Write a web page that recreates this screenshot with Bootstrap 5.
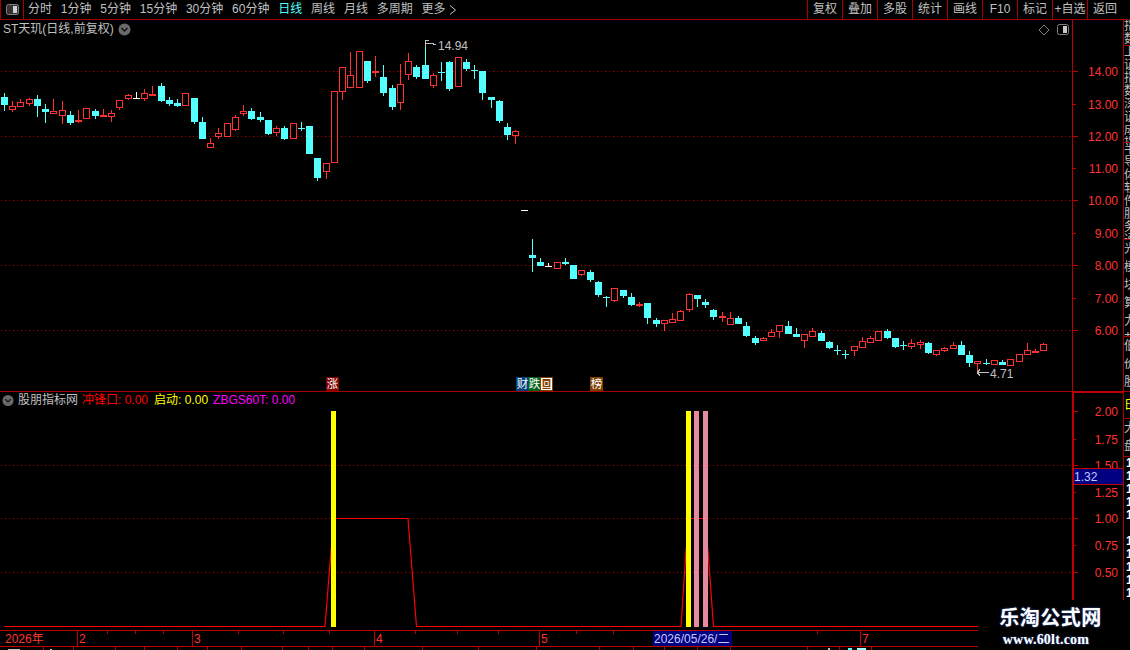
<!DOCTYPE html>
<html lang="zh-CN">
<head>
  <meta charset="UTF-8" />
  <meta name="viewport" content="width=device-width, initial-scale=1.0"/>
  <title>ST天玑 日线</title>
  <link href="https://cdn.jsdelivr.net/npm/bootstrap@5.3.2/dist/css/bootstrap.min.css" rel="stylesheet">
  <style>
    html, body {
      height: 650px;
      overflow: hidden;
      background: #000;
    }

    body {
      position: relative;
      width: 1130px;
      font: 12px/16px "Liberation Sans", "Noto Sans CJK SC", sans-serif;
      color: #c0c0c0;
    }

    .tool-bar {
      height: 20px;
      border-bottom: 1px solid #a80000;
    }

    .tool-first {
      width: 24px;
      padding-left: 4px;
      border-left: 1px solid #a80000;
      border-right: 1px solid #a80000;
    }

    .tool-tabs {
      gap: 8.8px;
      padding-left: 4px;
    }

    .tool-tabs .nav-link,
    .tool-right .nav-link {
      padding: 0;
      color: #c0c0c0;
      line-height: 19px;
      white-space: nowrap;
    }

    .tool-tabs .nav-link.active-tab {
      color: #54ffff;
    }

    .tool-right .nav-link {
      width: 35px;
      text-align: center;
      border-left: 1px solid #a80000;
    }

    .tool-right {
      padding-right: 8px;
    }

    .pane-main {
      height: 372px;
    }

    .pane-sub {
      height: 238px;
    }

    .pane-axis {
      height: 20px;
    }

    .pane-main svg,
    .pane-sub svg,
    .pane-axis svg {
      display: block;
    }

    svg text {
      font-family: "Liberation Sans", "Noto Sans CJK SC", sans-serif;
      font-size: 12px;
    }

    .work-left {
      width: 1123px;
    }

    .pane-head {
      position: absolute;
      left: 3px;
      top: 1px;
      gap: 4px;
      white-space: nowrap;
    }

    .sub-head {
      left: 2px;
      top: 0;
    }

    .val-red { color: #ff0000; margin-right: 2px; }
    .val-yellow { color: #ffff00; margin-right: 1px; }
    .val-pink { color: #ff00ff; }

    .side-strip {
      width: 7px;
      height: 630px;
      border-left: 1px solid #a80000;
      overflow: hidden;
    }

    .strip-cell {
      overflow: hidden;
      border-bottom: 1px solid #a80000;
      flex-shrink: 0;
      line-height: 13px;
    }

    .strip-cell div {
      width: 13px;
      word-break: break-all;
    }

    .strip-sparse {
      line-height: 18px;
    }

    .strip-sign {
      color: #ffff00;
      line-height: 26px;
    }

    .strip-nums {
      padding-left: 2px;
      color: #fff;
      font-weight: 700;
      line-height: 13px;
    }

    .tag-row {
      position: absolute;
      left: 0;
      top: 357px;
      height: 13px;
    }

    .tag-cell {
      position: absolute;
      top: 0;
      width: 13px;
      height: 14px;
      color: #fff;
      line-height: 14px;
      text-align: center;
      font-size: 11.5px;
    }

    .tag-box {
      outline: 1px solid #fff;
      outline-offset: -2px;
    }

    .logo-box {
      position: absolute;
      right: 0;
      bottom: 0;
      width: 152px;
      height: 50px;
      background: #000;
      color: #fff;
      text-align: center;
      font-weight: 700;
    }

    .logo-cn {
      margin-top: 6px;
      margin-left: 20px;
      width: 105px;
      font-size: 20px;
      line-height: 24px;
      letter-spacing: .5px;
      white-space: nowrap;
      text-shadow: 0 0 2px #3a5fc0;
    }

    .logo-en {
      margin-top: 2px;
      margin-left: 23px;
      width: 90px;
      font-family: "Liberation Serif", serif;
      font-size: 14px;
      line-height: 16px;
      letter-spacing: .2px;
      white-space: nowrap;
      text-shadow: 0 0 2px #3a5fc0;
    }
  </style>
</head>
<body>
  <nav class="tool-bar d-flex justify-content-between">
    <div class="d-flex">
      <div class="tool-first d-flex align-items-center">
        <svg width="14" height="12" viewBox="0 0 14 12">
          <rect x="1.5" y="0.5" width="12" height="10" rx="2" fill="#333" stroke="#808080"/>
          <rect x="8" y="2" width="4" height="7" fill="#d0d0d0"/>
        </svg>
      </div>
      <div class="tool-tabs nav flex-nowrap">
        <a class="nav-link" href="#">分时</a>
        <a class="nav-link" href="#">1分钟</a>
        <a class="nav-link" href="#">5分钟</a>
        <a class="nav-link" href="#">15分钟</a>
        <a class="nav-link" href="#">30分钟</a>
        <a class="nav-link" href="#">60分钟</a>
        <a class="nav-link active-tab" href="#">日线</a>
        <a class="nav-link" href="#">周线</a>
        <a class="nav-link" href="#">月线</a>
        <a class="nav-link" href="#">多周期</a>
        <a class="nav-link" href="#">更多
          <svg width="8" height="10" viewBox="0 0 8 10"><polyline points="1,0.5 6.5,5 1,9.5" fill="none" stroke="#c0c0c0"/></svg>
        </a>
      </div>
    </div>
    <div class="tool-right nav flex-nowrap">
      <a class="nav-link" href="#">复权</a>
      <a class="nav-link" href="#">叠加</a>
      <a class="nav-link" href="#">多股</a>
      <a class="nav-link" href="#">统计</a>
      <a class="nav-link" href="#">画线</a>
      <a class="nav-link" href="#">F10</a>
      <a class="nav-link" href="#">标记</a>
      <a class="nav-link" href="#">+自选</a>
      <a class="nav-link" href="#">返回</a>
    </div>
  </nav>

  <div class="d-flex">
    <div class="work-left">
      <div class="pane-main position-relative">
        <svg id="main-chart" width="1123" height="372" viewBox="0 20 1123 372" shape-rendering="crispEdges"></svg>
        <div class="pane-head d-flex align-items-center">
          <span>ST天玑(日线,前复权)</span>
          <svg width="13" height="13" viewBox="0 0 13 13"><circle cx="6.5" cy="6.5" r="6" fill="#6a6a6a"/><polyline points="3.5,5 6.5,8 9.5,5" fill="none" stroke="#111" stroke-width="1.4"/></svg>
        </div>
        <div class="tag-row">
          <span class="tag-cell" style="left:326px;background:#800000">涨</span>
          <span class="tag-cell" style="left:516px;background:#00407a">财</span>
          <span class="tag-cell" style="left:528px;background:#006020">跌</span>
          <span class="tag-cell tag-box" style="left:540px;background:#804000">回</span>
          <span class="tag-cell" style="left:590px;background:#804000">榜</span>
        </div>
      </div>
      <div class="pane-sub position-relative">
        <svg id="sub-chart" width="1123" height="238" viewBox="0 392 1123 238" shape-rendering="crispEdges"></svg>
        <div class="pane-head sub-head d-flex align-items-center">
          <svg width="12" height="13" viewBox="0 0 13 13"><circle cx="6.5" cy="6.5" r="6" fill="#6a6a6a"/><polyline points="3.5,5 6.5,8 9.5,5" fill="none" stroke="#111" stroke-width="1.4"/></svg>
          <span>股朋指标网</span>
          <span class="val-red">冲锋口: 0.00</span>
          <span class="val-yellow">启动: 0.00</span>
          <span class="val-pink">ZBGS60T: 0.00</span>
        </div>
      </div>
      <div class="pane-axis">
        <svg id="date-axis" width="1123" height="20" viewBox="0 630 1123 20" shape-rendering="crispEdges"></svg>
      </div>
    </div>
    <div class="side-strip d-flex flex-column">
      <div class="strip-cell" style="height:26px"><div>指数板块</div></div>
      <div class="strip-cell" style="height:97px"><div>上证指数深证成指创业板指科创综指沪深北证</div></div>
      <div class="strip-cell" style="height:97px"><div>半导体软件服务通信设备电子元件计算机军工</div></div>
      <div class="strip-cell strip-sparse" style="height:97px"><div>光模块算力芯片存储</div></div>
      <div class="strip-cell strip-sparse" style="height:55px"><div>低价股次新</div></div>
      <div class="strip-cell strip-sign" style="height:27px"><div>日</div></div>
      <div class="strip-cell strip-sparse" style="height:38px"><div>大盘</div></div>
      <div class="strip-nums"><div>1</div><div>1</div><div>1</div><div>1</div><div>1</div><div>&nbsp;</div><div>1</div><div>1</div><div>1</div><div>1</div><div>1</div><div>1</div></div>
    </div>
  </div>

  <div class="logo-box">
    <div class="logo-cn">乐淘公式网</div>
    <div class="logo-en">www.60lt.com</div>
  </div>

  <script src="https://cdn.jsdelivr.net/npm/bootstrap@5.3.2/dist/js/bootstrap.bundle.min.js"></script>
  <script>
    const RED = '#ff3232', CYAN = '#54ffff', LINE = '#b00000';

    // candles: [colour, wick top, wick bottom, body top, body bottom], measured at 3x from y0
    const candleRuns = [
      [60, [
        ['c',99,153,111,135],['r',123,156,138,150],['r',117,141,126,141],['r',114,138,117,132],
        ['c',105,171,117,138],['c',132,189,147,156],['r',117,162,153,162],['r',123,192,150,168],
        ['c',153,195,165,189],['r',150,189,180,186],['r',144,177,144,177],['c',147,177,153,168],
        ['r',147,171,165,171],['r',150,186,159,171],['r',120,150,120,144],['r',102,120,105,117],
        ['w',96,117,114,117],['r',87,123,99,117],['r',78,108,102,108],['c',69,126,78,123],
        ['c',111,138,120,132],['c',117,141,129,138],['r',99,138,99,138],['c',114,192,114,186],
        ['c',171,237,186,237],['r',234,264,249,264],['r',204,237,219,231],['r',189,231,189,231],
        ['r',165,213,171,210],['r',135,168,153,162],['c',144,180,153,177],['c',156,186,171,180],
        ['c',180,225,180,222],['r',198,228,204,219]
      ]],
      [30, [
        ['c',288,330,294,327],['r',279,327,279,327],['c',276,303,294,297],['c',288,372,288,372],
        ['c',384,453,384,444],['r',400,447,400,426],['r',183,399,183,399],['r',111,210,111,186],
        ['r',66,174,135,174],['r',63,174,63,174],['c',93,159,93,153],['r',78,141,123,129],
        ['c',105,198,141,189],['c',165,240,174,231],['r',102,240,162,219],['r',69,150,93,135],
        ['c',105,147,111,141],['c',30,147,105,147],['r',129,174,135,168],['c',96,153,126,129],
        ['c',93,183,96,177],['r',81,171,81,171],['c',87,123,96,117],['c',105,147,120,123],
        ['c',123,210,123,189],['c',201,234,201,210],['c',210,279,213,273],['c',279,330,291,315],
        ['r',300,342,303,318]
      ]],
      [200, [
        ['w',30,33,30,33],['c',117,216,165,174],['c',174,198,186,198],['w',189,201,198,201],
        ['r',186,207,186,207],['c',174,195,186,192],['c',195,237,195,237],['r',210,228,210,225],
        ['c',210,246,216,240],['c',243,291,246,285],['c',288,321,291,294],['r',264,306,264,303],
        ['c',270,294,270,288],['c',279,318,291,315],['r',306,321,312,318],['c',309,372,309,354],
        ['c',354,381,360,372],['r',360,393,360,372],['r',339,369,357,369],['r',330,363,333,363],
        ['r',279,336,282,330],['c',285,321,285,297],['c',297,324,306,315],['c',327,360,330,351],
        ['r',336,366,348,354],['r',336,375,354,375],['c',348,372,354,372],['c',366,411,378,408],
        ['c',408,435,414,429],['r',411,423,414,423],['r',387,411,396,411],['r',375,414,375,396],
        ['c',363,402,378,402]
      ]],
      [310, [
        ['c',54,81,72,81],['r',72,114,72,93],['r',54,81,63,81],['c',63,93,69,93],
        ['c',93,117,96,114],['c',105,135,120,123],['c',120,147,132,135],['r',108,138,108,123],
        ['r',81,114,93,114],['r',78,99,84,99],['r',63,93,63,93],['c',57,87,63,84],
        ['c',84,114,84,111],['c',93,120,105,108],['r',87,117,99,111],['r',90,117,96,105],
        ['c',96,132,99,129],['r',120,138,120,135],['r',111,126,114,123],['r',96,117,105,117],
        ['c',93,135,105,135],['c',123,171,135,159],['r',153,192,153,162],['c',147,165,159,162],
        ['r',150,165,150,165],['c',150,165,156,165],['r',147,168,147,168],['r',132,156,132,156],
        ['r',99,135,120,135],['r',117,129,123,129],['r',99,123,102,123]
      ]]
    ];

    function rect(x, y, w, h, fill) {
      return `<rect x="${x}" y="${y}" width="${w}" height="${h}" fill="${fill}"/>`;
    }

    function dotted(y, x2) {
      return `<line x1="1" x2="${x2}" y1="${y + .5}" y2="${y + .5}" stroke="${LINE}" stroke-dasharray="1 3"/>`;
    }

    function label(x, y, txt, fill, anchor) {
      return `<text x="${x}" y="${y}" fill="${fill}" text-anchor="${anchor || 'end'}" shape-rendering="auto">${txt}</text>`;
    }

    // main pane
    let main = '';
    [71, 136, 200, 265, 330].forEach(y => main += dotted(y, 1072));

    let idx = 0;
    candleRuns.forEach(([y0, list]) => {
      list.forEach(([kind, wt, wb, bt, bb]) => {
        const col = Math.floor(4.33 + 8.25 * idx);
        const colour = kind === 'r' ? RED : kind === 'c' ? CYAN : '#fff';
        const top = y0 + Math.round(bt / 3), bot = y0 + Math.round(bb / 3);
        const wtop = y0 + Math.round(wt / 3), wbot = y0 + Math.round(wb / 3);
        main += rect(col, wtop, 1, wbot - wtop, colour);
        main += rect(col - 3, top, 7, Math.max(bot - top, 1), colour);
        if (kind === 'r' && bot - top > 2) main += rect(col - 2, top + 1, 5, bot - top - 2, '#000');
        idx++;
      });
    });

    // axis, ticks and price labels
    main += rect(1072, 20, 1, 372, '#c00000');
    main += rect(0, 391, 1072, 1, '#a80000');
    main += rect(1073, 391, 50, 1, '#c00000');
    [[14, 71], [13, 104], [12, 136], [11, 168], [10, 200], [9, 233], [8, 265], [7, 298], [6, 330]].forEach(([p, y]) => {
      main += rect(1073, y, p % 2 ? 3 : 5, 1, '#c00000');
      main += label(1118, y + 5, p.toFixed(2), RED);
    });

    // high and low marks
    main += '<g stroke="#c0c0c0" fill="none">' +
      '<path d="M425.5 40.5H429M425.5 40.5V46M426 43L431 43L436 45"/>' +
      '<path d="M977 372.5H989M977 372.5L980 369.5M977 372.5L980 375.5"/></g>';
    main += label(438, 50, '14.94', '#c0c0c0', 'start');
    main += label(990, 378, '4.71', '#c0c0c0', 'start');

    // corner icons
    main += '<g shape-rendering="auto"><path d="M1044 25L1049 30L1044 35L1039 30Z" fill="none" stroke="#808080"/>' +
      '<rect x="1057.5" y="24.5" width="11" height="10" rx="2" fill="#000" stroke="#808080"/>' +
      rect(1063, 26, 4, 7, '#c8c8c8') + '</g>';
    document.getElementById('main-chart').innerHTML = main;

    // lower pane
    let sub = '';
    [465, 518, 572].forEach(y => sub += dotted(y, 1072));
    sub += '<polyline shape-rendering="auto" fill="none" stroke="#ff0000" stroke-width="1.2" points="4,626.5 325,626.5 331,551 335,518.5 408,518.5 416.5,626.5 681,626.5 686,551 690,518.5 704,518.5 708,551 713.5,626.5 1123,626.5"/>';
    sub += rect(331, 411, 5, 216, '#ffff00');
    sub += rect(686, 411, 5, 216, '#ffff00');
    sub += rect(694, 411, 5, 216, '#e58a9e');
    sub += rect(703, 411, 5, 216, '#e58a9e');
    sub += rect(1072, 392, 2, 238, '#c00000');
    sub += rect(1073, 392, 50, 1, '#c00000');
    [[2, 411], [1.75, 439], [1.5, 465], [1.25, 492], [1, 518], [.75, 545], [.5, 572]].forEach(([p, y]) => {
      sub += rect(1074, y, p % .5 ? 2 : 4, 1, '#c00000');
      sub += label(1118, y + 5, p.toFixed(2), RED);
    });
    sub += rect(1074, 468, 49, 17, '#c00000') + rect(1074, 469, 49, 15, '#000080');
    sub += label(1074, 481, '1.32', '#c8c8ff', 'start');
    document.getElementById('sub-chart').innerHTML = sub;

    // date axis
    let axis = rect(0, 630, 1123, 1, '#c00000') + rect(0, 646, 1123, 1, '#c00000');
    [107, 135, 163, 238, 283, 329, 415, 457, 498, 576, 613, 817].forEach(x => axis += rect(x, 631, 1, 3, '#c00000'));
    [43, 73, 115, 144, 177, 207, 241, 282, 308, 332, 364, 422, 478, 536, 599, 633, 664, 697, 730, 807, 839, 871].forEach(x => axis += rect(x, 647, 1, 3, '#c00000'));
    [[77, '2'], [192, '3'], [374, '4'], [539, '5'], [860, '7']].forEach(([x, t]) => {
      axis += rect(x, 631, 1, 15, '#c00000');
      axis += label(x + 2, 643, t, RED, 'start');
    });
    axis += label(5, 643, '2026年', RED, 'start');
    axis += rect(653, 631, 79, 15, '#000080');
    axis += label(654, 643, '2026/05/26/二', '#c8c8ff', 'start');
    axis += rect(8, 649, 12, 1, '#c0c0c0') + rect(50, 649, 2, 1, '#c0c0c0');
    axis += rect(828, 648, 2, 2, '#c0c0c0') + rect(848, 648, 4, 2, CYAN) + rect(857, 648, 9, 2, '#a0ffff');
    document.getElementById('date-axis').innerHTML = axis;
  </script>
</body>
</html>
